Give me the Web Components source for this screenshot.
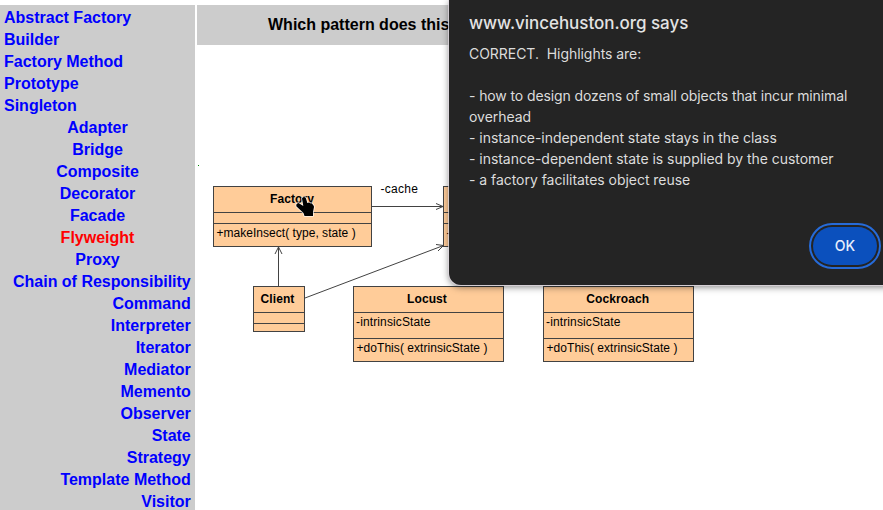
<!DOCTYPE html>
<html lang="en">
<head>
<meta charset="utf-8">
<title>Design Patterns Quiz</title>
<style>
html,body{margin:0;width:883px;height:510px;overflow:hidden;background:#fff}
</style>
</head>
<body>
<quiz-page></quiz-page>
<script>
class Base extends HTMLElement {
  connectedCallback() {
    if (this.shadowRoot) return;
    this.attachShadow({ mode: 'open' }).innerHTML = this.render();
  }
}

/* Group of pattern links sharing one alignment. */
customElements.define('pattern-group', class extends Base {
  render() {
    const active = this.getAttribute('active');
    return `<style>
      :host{display:block;text-align:var(--align,left)}
      a{display:block;line-height:22px;height:22px;color:#00f;white-space:nowrap}
      a.active{color:#f00}
    </style>` + this.getAttribute('items').split('|')
      .map(t => `<a class="${t === active ? 'active' : ''}">${t}</a>`).join('');
  }
});

customElements.define('pattern-nav', class extends Base {
  render() {
    return `<style>
      :host{display:block;box-sizing:border-box;background:#ccc;padding:2px 4px 0;font:bold 16px "Liberation Sans",Arial,sans-serif;overflow:hidden}
      .center{--align:center}.right{--align:right;padding-right:.25px}
    </style>
    <pattern-group items="Abstract Factory|Builder|Factory Method|Prototype|Singleton"></pattern-group>
    <pattern-group class="center" active="Flyweight" items="Adapter|Bridge|Composite|Decorator|Facade|Flyweight|Proxy"></pattern-group>
    <pattern-group class="right" items="Chain of Responsibility|Command|Interpreter|Iterator|Mediator|Memento|Observer|State|Strategy|Template Method|Visitor"></pattern-group>`;
  }
});

customElements.define('quiz-header', class extends Base {
  render() {
    return `<style>
      :host{display:block;background:#ccc;height:40px;padding-left:71px;font:bold 16px/39px "Liberation Sans",Arial,sans-serif;color:#000;white-space:nowrap}
    </style><slot></slot>`;
  }
});

/* UML class box: name, attributes and operations compartments. */
customElements.define('uml-class', class extends Base {
  render() {
    return `<style>
      :host{display:grid;box-sizing:border-box;grid-template-rows:25px var(--mid,10px) 1fr;row-gap:1px;background:#424242;border:1px solid #424242;font:12px "Liberation Sans",Arial,sans-serif;color:#000;white-space:pre}
      div{background:#fc9;min-width:0;overflow:hidden;padding-left:2px;line-height:19px}
      .name{padding:0 var(--name-pad,3px) 0 0;text-align:center;font-weight:bold;line-height:24px;letter-spacing:.1px}
      .attr{letter-spacing:.13px}
      .op{padding-left:2.5px;letter-spacing:var(--op-ls,.05px)}
    </style>
    <div class="name"><slot></slot></div>
    <div class="attr"><slot name="attr"></slot></div>
    <div class="op"><slot name="op"></slot></div>`;
  }
});

customElements.define('uml-diagram', class extends Base {
  render() {
    return `<style>
      :host{display:block;position:relative}
      uml-class,.label,svg{position:absolute}
      svg{left:0;top:0}
      .factory{left:16px;top:141px;width:159px;height:61px;--op-ls:.03px;--name-pad:1px}
      .insect{left:246px;top:141px;width:159px;height:61px}
      .client{left:56px;top:241px;width:52px;height:46px}
      .locust,.roach{top:241px;width:151px;height:76px;--mid:25px}
      .locust{left:156px}.roach{left:346px;--name-pad:1.5px}
      .label{left:183.500px;top:136px;font:12px/16px "Liberation Sans",Arial,sans-serif;letter-spacing:.3px}
    </style>
    <uml-class class="factory">Factory<span slot="op">+makeInsect( type, state )</span></uml-class>
    <uml-class class="insect"><span slot="op">-</span></uml-class>
    <uml-class class="client">Client</uml-class>
    <uml-class class="locust">Locust<span slot="attr">-intrinsicState</span><span slot="op">+doThis( extrinsicState )</span></uml-class>
    <uml-class class="roach">Cockroach<span slot="attr">-intrinsicState</span><span slot="op">+doThis( extrinsicState )</span></uml-class>
    <span class="label">-cache</span>
    <svg width="686" height="465" viewBox="197 45 686 465" fill="none" stroke="#424242">
      <path d="M372 206.5H443M436 203.5L443 206.5L436 209.5"/>
      <path d="M278.5 286V247M275 254L278.5 247L282 254"/>
      <path d="M305 298L443.500 245.500M436 244.500L443.500 245.500L438 251"/>
      <rect x="198" y="165" width="1" height="1" fill="#080" stroke="none"/>
      <path fill="#000" stroke="#fff" stroke-width="1.600" stroke-opacity=".8" stroke-linejoin="round" paint-order="stroke" d="M302 198.500Q302.300 197 304 197T306 198.500L307.300 203Q309.500 201.800 310.500 203.500Q312.300 202.800 313 205Q314 205.500 314 207L313 212V216H304.500L303.500 213L296.500 206.500Q295.500 203.500 298.500 203L303.300 206Z"/>
    </svg>`;
  }
});

customElements.define('ok-button', class extends Base {
  render() {
    return `<style>
      :host{display:block}
      button{display:block;width:64px;height:38px;padding:0;border:0;border-radius:19px;background:#0b50bd;color:#e8eefc;font:500 14px/38px Inter,sans-serif;outline:2px solid #266bd9;outline-offset:2px}
    </style><button><slot></slot></button>`;
  }
});

customElements.define('alert-dialog', class extends Base {
  render() {
    return `<style>
      :host{display:flex;flex-direction:column;box-sizing:border-box;background:#242424;border-radius:0 0 0 12px;padding:11px 16px 20px 20px;color:#dcdcdc;font-family:Inter,sans-serif;box-shadow:0 0 0 1px rgba(225,218,225,.75),0 2px 7px rgba(0,0,0,.5)}
      h1{margin:0;font-size:17px;line-height:24px;font-weight:500;color:#e3e3e3;letter-spacing:-.04px;white-space:nowrap}
      .body{margin-top:8px;font-size:14px;line-height:21px;white-space:pre;flex:1;letter-spacing:-.04px}
      ::slotted(.tight){letter-spacing:-.11px}
      ok-button{align-self:flex-end}
    </style>
    <h1><slot name="title"></slot></h1>
    <div class="body"><slot></slot></div>
    <ok-button>OK</ok-button>`;
  }
});

customElements.define('quiz-page', class extends Base {
  render() {
    return `<style>
      :host{display:grid;grid-template-columns:195px 1fr;column-gap:2px;padding-top:5px;box-sizing:border-box;width:883px;height:510px;overflow:hidden;position:relative}
      main{display:grid;grid-template-rows:40px 1fr;min-width:0}
      alert-dialog{position:absolute;left:449px;top:0;width:444px;height:285px}
    </style>
    <pattern-nav></pattern-nav>
    <main>
      <quiz-header>Which pattern does this</quiz-header>
      <uml-diagram></uml-diagram>
    </main>
    <alert-dialog><span slot="title">www.vincehuston.org says</span>CORRECT.  Highlights are:

<span class="tight">- how to design dozens of small objects that incur minimal</span>
overhead
- instance-independent state stays in the class
- instance-dependent state is supplied by the customer
- a factory facilitates object reuse</alert-dialog>`;
  }
});
</script>
</body>
</html>
